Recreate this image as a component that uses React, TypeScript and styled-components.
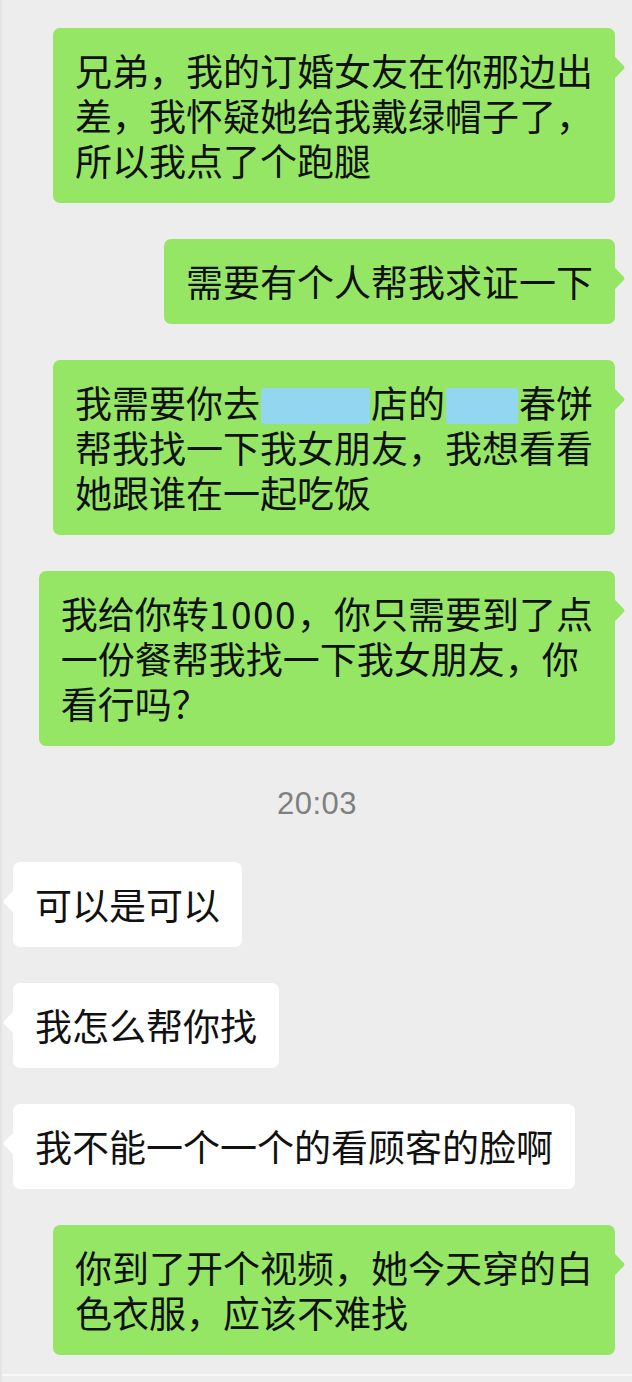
import React from "react";
import styled, { createGlobalStyle } from "styled-components";

const GlobalStyle = createGlobalStyle`
  html, body {
    margin: 0;
    padding: 0;
    background: #ededed;
  }
  body {
    font-family: "Noto Sans CJK SC", "Noto Sans", sans-serif;
  }
`;

const Page = styled.div`
  width: 632px;
  min-height: 1382px;
  box-sizing: border-box;
  background: #ededed;
  padding-top: 28px;
  display: flex;
  flex-direction: column;
  gap: 36px;
  position: relative;
  border-left: 2px solid #e4e4e4;
`;

const Row = styled.div<{ $side: "left" | "right" }>`
  display: flex;
  justify-content: ${(p) => (p.$side === "right" ? "flex-end" : "flex-start")};
  padding: ${(p) => (p.$side === "right" ? "0 17px 0 0" : "0 0 0 11px")};
`;

const Bubble = styled.div<{ $side: "left" | "right" }>`
  position: relative;
  box-sizing: border-box;
  padding: 20px 22px;
  border-radius: 7px;
  background: ${(p) => (p.$side === "right" ? "#96e666" : "#ffffff")};
  color: #111111;
  font-family: "Noto Sans CJK SC", sans-serif;
  font-size: 37px;
  line-height: 45px;
  white-space: nowrap;

  &::after {
    content: "";
    position: absolute;
    top: 31px;
    width: 17px;
    height: 17px;
    border-radius: 3px;
    background: inherit;
    transform: rotate(45deg);
    ${(p) => (p.$side === "right" ? "right: -7px;" : "left: -7px;")}
  }
`;

const Line = styled.span`
  display: block;
`;

const Digits = styled.span`
  letter-spacing: 1.5px;
`;

const Masked = styled.span<{ $chars: number }>`
  display: inline-block;
  width: ${(p) => p.$chars * 37 - 2}px;
  height: 36px;
  margin: 0 1px;
  vertical-align: -6px;
  background: #93d6ef;
  border-radius: 3px;
`;

const TimeRow = styled.div`
  display: flex;
  justify-content: center;
  padding-top: 3px;
  margin-bottom: 3px;
`;

const Time = styled.span`
  font-family: "Liberation Sans", Arial, sans-serif;
  font-size: 31px;
  line-height: 38px;
  color: #808080;
  letter-spacing: 0.5px;
`;

const BottomLine = styled.div`
  position: absolute;
  left: 0;
  right: 0;
  bottom: 6px;
  height: 2px;
  background: #f7f7f7;
`;

type Msg =
  | { kind: "msg"; side: "left" | "right"; lines: React.ReactNode[] }
  | { kind: "time"; text: string };

const messages: Msg[] = [
  {
    kind: "msg",
    side: "right",
    lines: ["兄弟，我的订婚女友在你那边出", "差，我怀疑她给我戴绿帽子了，", "所以我点了个跑腿"],
  },
  { kind: "msg", side: "right", lines: ["需要有个人帮我求证一下"] },
  {
    kind: "msg",
    side: "right",
    lines: [
      <>
        我需要你去<Masked $chars={3} />店的<Masked $chars={2} />春饼
      </>,
      "帮我找一下我女朋友，我想看看",
      "她跟谁在一起吃饭",
    ],
  },
  {
    kind: "msg",
    side: "right",
    lines: [
      <>
        我给你转<Digits>1000</Digits>，你只需要到了点
      </>,
      "一份餐帮我找一下我女朋友，你",
      "看行吗？",
    ],
  },
  { kind: "time", text: "20:03" },
  { kind: "msg", side: "left", lines: ["可以是可以"] },
  { kind: "msg", side: "left", lines: ["我怎么帮你找"] },
  { kind: "msg", side: "left", lines: ["我不能一个一个的看顾客的脸啊"] },
  {
    kind: "msg",
    side: "right",
    lines: ["你到了开个视频，她今天穿的白", "色衣服，应该不难找"],
  },
];

export default function App() {
  return (
    <>
      <GlobalStyle />
      <Page>
        {messages.map((m, i) =>
          m.kind === "time" ? (
            <TimeRow key={i}>
              <Time>{m.text}</Time>
            </TimeRow>
          ) : (
            <Row key={i} $side={m.side}>
              <Bubble $side={m.side}>
                {m.lines.map((l, j) => (
                  <Line key={j}>{l}</Line>
                ))}
              </Bubble>
            </Row>
          )
        )}
        <BottomLine />
      </Page>
    </>
  );
}
